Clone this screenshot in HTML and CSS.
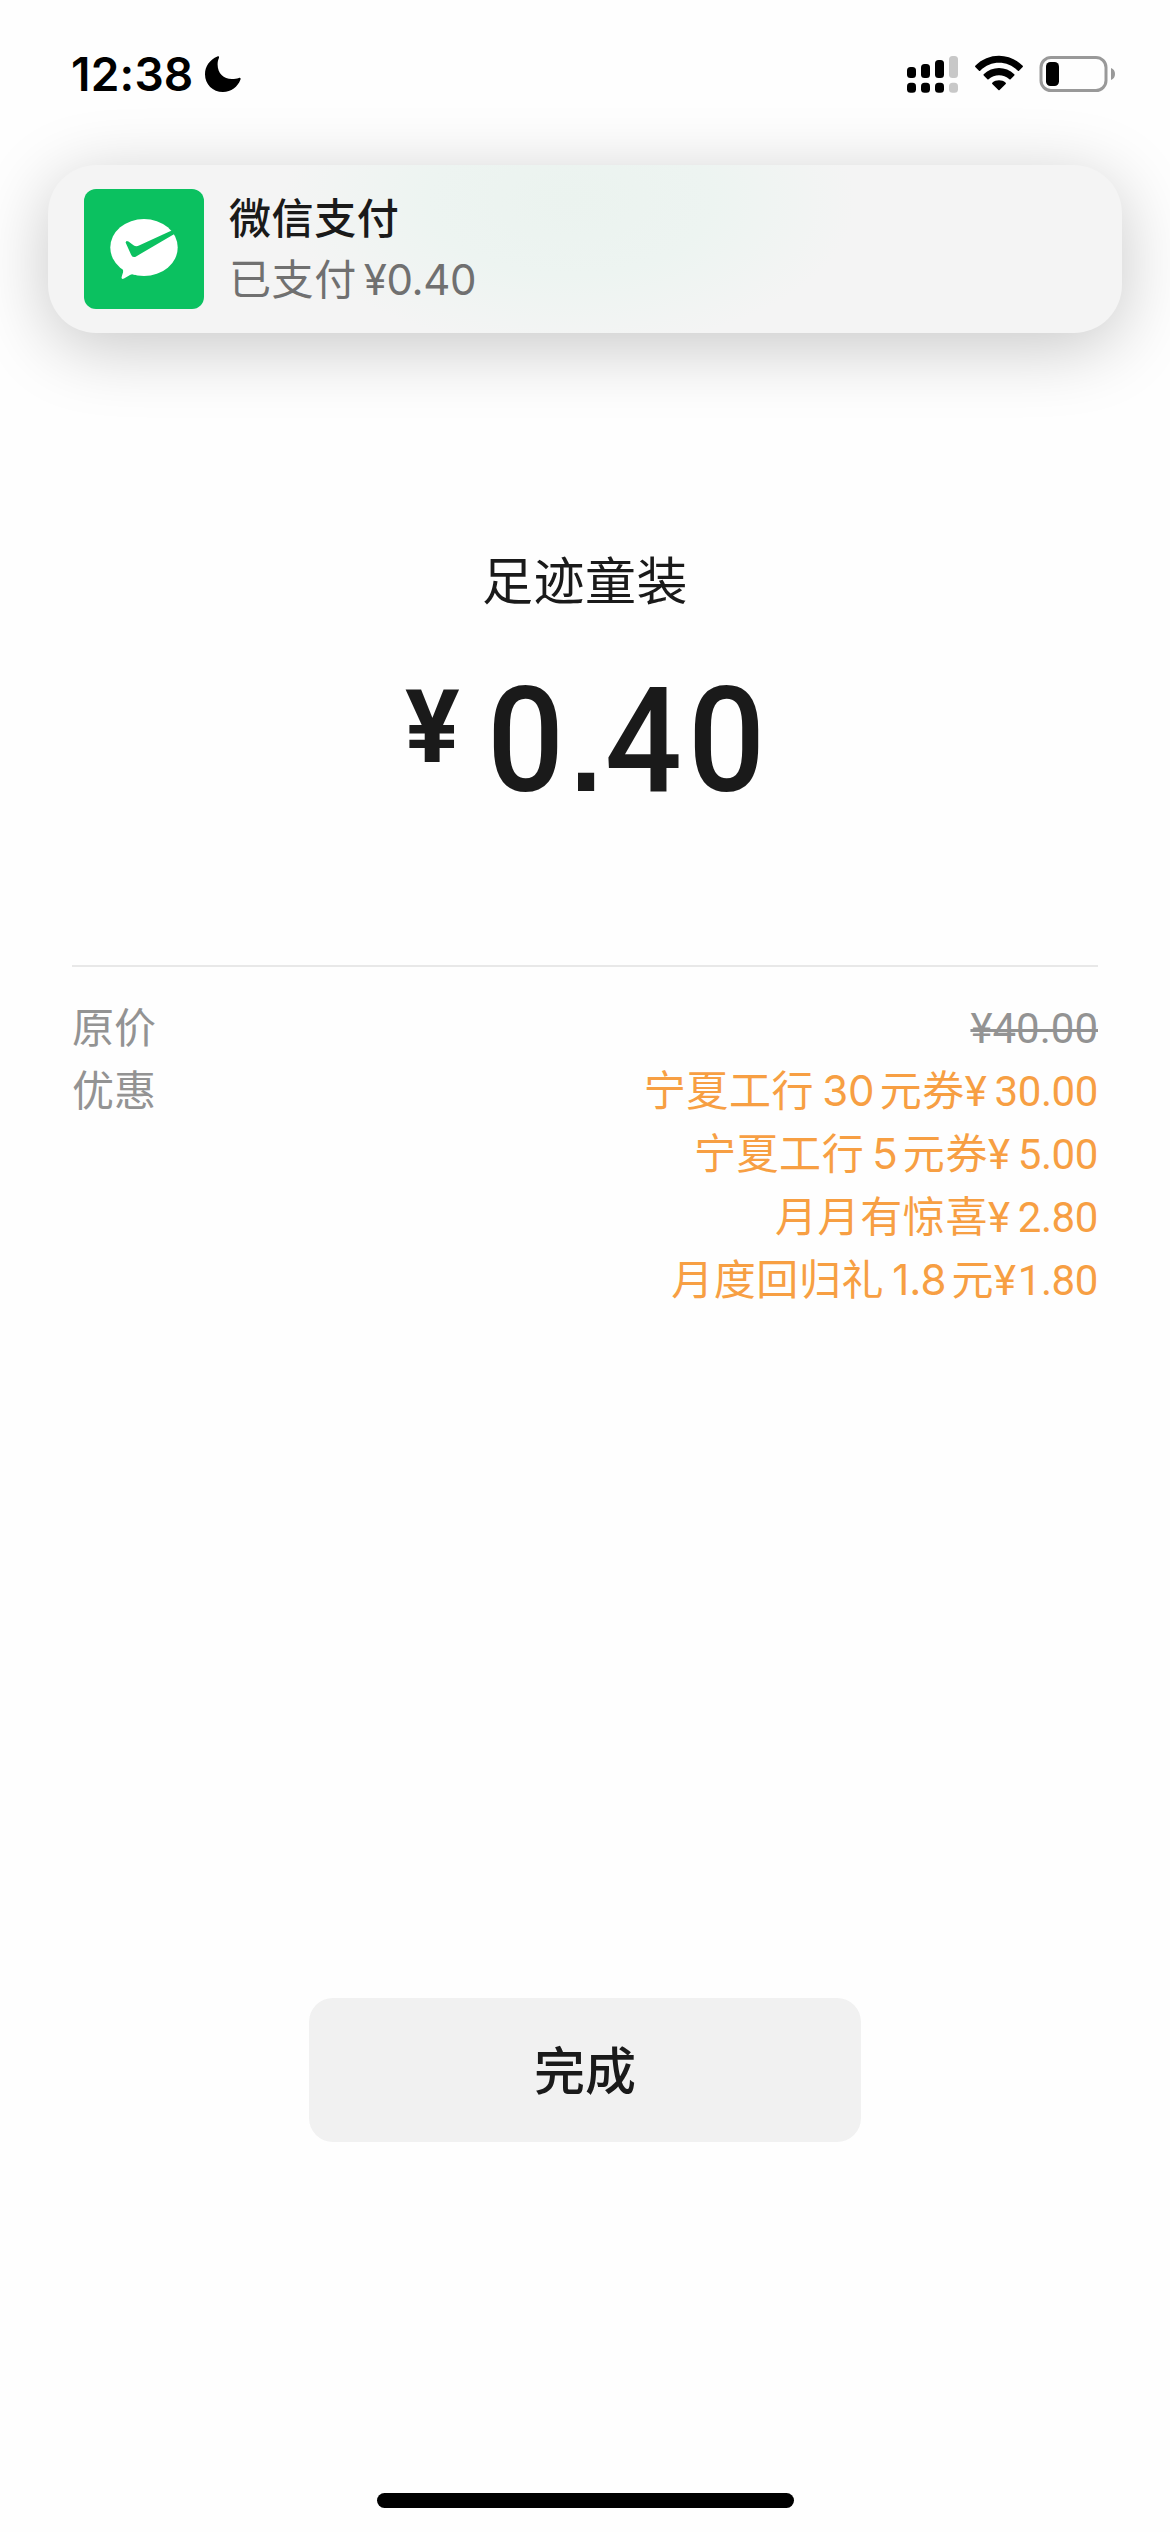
FILE: index.html
```html
<!DOCTYPE html>
<html lang="zh-CN">
<head>
<meta charset="utf-8">
<title>微信支付</title>
<link rel="stylesheet" href="styles.css">
</head>
<body>
<div class="screen">
  <header class="status">
    <div class="status-left">
      <span class="clock">12:38</span>
      <svg class="moon" width="38" height="38" viewBox="0 0 38 38"><path d="M13.4 1.4C14.6.9 15.4 1.700 15 2.800 14 5.200 13.600 7 13.600 9.400 13.600 18 19.500 24 28 24 30.600 24 32.800 23.600 34.800 22.900 36.200 22.400 37 23.200 36.500 24.500 33.700 31.800 27.200 37 19 37 8.700 37 1 29.400 1 19.200 1 11.200 5.800 4.500 13.400 1.400Z"/></svg>
    </div>
    <div class="status-right">
      <svg width="52" height="38" viewBox="0 0 52 38">
        <rect x="0" y="12" width="9" height="11" rx="3.500"/><rect x="14" y="9" width="9" height="14" rx="3.500"/><rect x="28" y="5" width="9" height="18" rx="3.500"/><rect class="dim" x="42" y="1" width="9" height="22" rx="3.500"/>
        <rect x="0" y="27.700" width="9" height="10" rx="3.500"/><rect x="14" y="27.700" width="9" height="10" rx="3.500"/><rect x="28" y="27.700" width="9" height="10" rx="3.500"/><rect class="dim" x="42" y="27.700" width="9" height="10" rx="3.500"/>
      </svg>
      <svg class="wifi" width="50" height="38" viewBox="0 0 50 38">
        <path d="M1.300 10.800C14.500-2.500 35.500-2.500 48.700 10.800Q49.200 11.400 48.700 12L45 15.700Q44.400 16.300 43.800 15.700C33 5.200 17 5.200 6.200 15.700Q5.600 16.300 5 15.700L1.300 12Q.8 11.400 1.300 10.800Z"/>
        <path d="M9.700 19.300C18.300 11 31.700 11 40.300 19.300Q40.900 19.900 40.300 20.500L36.600 24.200Q36 24.700 35.400 24.200C29.500 18.800 20.500 18.800 14.600 24.200Q14 24.700 13.400 24.200L9.700 20.500Q9.100 19.900 9.700 19.300Z"/>
        <path d="M18.300 27.700C22.200 24.500 27.800 24.500 31.700 27.700Q32.300 28.300 31.700 28.900L25.600 35Q25 35.600 24.400 35L18.300 28.900Q17.700 28.300 18.300 27.700Z"/>
      </svg>
      <svg width="76" height="38" viewBox="0 0 76 38"><rect class="shell" x="2" y="2.500" width="65" height="33" rx="10"/><rect x="7" y="7" width="13" height="24" rx="4.500"/><path class="nub" d="M72 13Q76 14.500 76 19T72 25Z"/></svg>
    </div>
  </header>

  <section class="banner">
    <svg class="logo" width="120" height="120" viewBox="0 0 120 120">
      <rect width="120" height="120" rx="12" fill="#0bc160"/>
      <ellipse cx="60" cy="58.500" rx="33.700" ry="28.500" fill="#fff"/>
      <path d="M38 78Q40 82 38.500 85L37.500 88.500Q37.600 90.800 40 89.500L46 86Q48 84.800 51 85.800L52 76Z" fill="#fff"/>
      <path d="M41.600 53.500Q42 51 44.500 52.500L49.500 56.200Q52 58 55 56.600L85.500 42.500 92 40 93 43.600 89.500 45.600 52.500 67.200Q48.500 69.500 47 65.500Z" fill="#0bc160"/>
    </svg>
    <div class="banner-text">
      <div class="banner-title">微信支付</div>
      <div class="banner-sub">已支付<span class="latin">¥0.40</span></div>
    </div>
  </section>

  <main class="receipt">
    <h1 class="merchant">足迹童装</h1>
    <div class="amount"><span class="currency">¥</span><span class="value">0<span class="point">.</span>40</span></div>
    <div class="details">
      <div class="row"><span>原价</span><span class="num original">¥40.00</span></div>
      <div class="row">
        <span>优惠</span>
        <div class="discounts">
          <div>宁夏工行<span class="latin">30</span>元券<span class="num"><span class="yen">¥</span>30.00</span></div>
          <div>宁夏工行<span class="latin">5</span>元券<span class="num"><span class="yen">¥</span>5.00</span></div>
          <div>月月有惊喜<span class="num"><span class="yen">¥</span>2.80</span></div>
          <div>月度回归礼<span class="latin">1.8</span>元<span class="num"><span class="yen tight">¥</span>1.80</span></div>
        </div>
      </div>
    </div>
  </main>

  <footer class="footer">
    <button class="done">完成</button>
    <div class="home"></div>
  </footer>
</div>
</body>
</html>
```
FILE: styles.css
```css
* { box-sizing: border-box; }
body { margin: 0; background: #fefefe; }
.screen {
  width: 1170px; height: 2532px; overflow: hidden;
  display: flex; flex-direction: column;
  background: #fefefe; color: #1a1a1a;
  font-family: "Noto Sans CJK SC", sans-serif;
}
.status {
  height: 165px; padding: 55px 54px 0 71px; flex: none;
  display: flex; justify-content: space-between; align-items: flex-start;
  position: relative; z-index: 1; color: #000;
}
.status svg { display: block; }
.status-left, .status-right { display: flex; align-items: flex-start; }
.clock { width: 133px; font: 600 46px/39px Inter, sans-serif; letter-spacing: .2px; white-space: nowrap; }
.status-right { width: 209px; }
.wifi { margin: 0 15px 0 15px; }
.dim { fill: #c8c8c8; }
.shell { fill: none; stroke: #999; stroke-width: 3; }
.nub { fill: #999; }

.banner {
  height: 168px; margin: 0 48px; padding: 24px 36px; flex: none;
  display: flex; gap: 25px; border-radius: 48px;
  background: radial-gradient(ellipse 285px 150px at 522px 35px, #ebf3ef 0, #edf4f1 50%, #f4f4f4 100%) #f4f4f4;
  box-shadow: 0 14px 70px rgba(0, 0, 0, .22);
}
.banner-text { display: flex; flex-direction: column; font-size: 42px; letter-spacing: .6px; }
.banner-title { height: 62px; line-height: 53px; font-weight: 500; }
.banner-sub { line-height: 58px; color: #707070; }
.latin { font-family: Inter, sans-serif; margin: 0 5px 0 8px; letter-spacing: 0; }
.banner-sub .latin { margin-left: 7px; letter-spacing: -.4px; }

.receipt { padding: 209px 72px 0; text-align: center; }
.merchant { margin: 0 0 3px; font-size: 51px; line-height: 72px; font-weight: 400; letter-spacing: .5px; }
.amount {
  display: flex; align-items: flex-start; gap: 27px;
  height: 348px; padding: 55px 0 0 333px; font-family: Roboto, sans-serif; font-weight: 500;
}
.currency { font-size: 102px; line-height: 110px; font-weight: 700; }
.value { font-size: 146px; line-height: 140px; letter-spacing: 6.5px; transform: scaleX(.93); transform-origin: left; }
.point { font: 700 123px/1 "Liberation Sans", sans-serif; letter-spacing: 3px; }
.details {
  border-top: 2px solid #e8e8e8; padding-top: 26px;
  color: #939393; font-size: 42px; line-height: 63px;
}
.row { display: flex; justify-content: space-between; align-items: baseline; height: 63px; }
.discounts { text-align: right; color: #f79f43; white-space: nowrap; letter-spacing: .6px; }
.discounts > div { height: 63px; }
.num { font-family: Roboto, sans-serif; letter-spacing: -.4px; }
.original { letter-spacing: 0; text-decoration: line-through; text-decoration-thickness: 3px; }
.yen { margin-right: 8px; }
.yen.tight { margin-right: 2px; }

.footer { margin-top: auto; height: 534px; display: flex; flex-direction: column; align-items: center; }
.done {
  width: 552px; height: 144px; border: 0; border-radius: 24px; padding: 0 0 4px;
  background: #f1f1f1; color: #1a1a1a; font: 500 51px/140px "Noto Sans CJK SC", sans-serif;
}
.home { width: 417px; height: 15px; border-radius: 8px; background: #000; margin-top: 351px; }
```
